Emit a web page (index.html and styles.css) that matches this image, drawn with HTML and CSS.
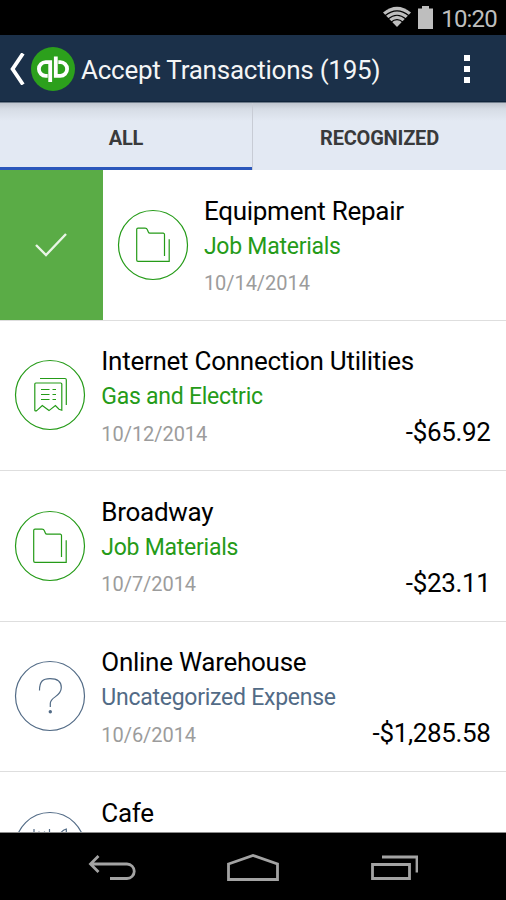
FILE: index.html
```html
<!DOCTYPE html>
<html lang="en">
<head>
<meta charset="utf-8">
<title>Accept Transactions</title>
<link rel="stylesheet" href="styles.css">
</head>
<body>
<svg class="defs" width="0" height="0">
  <symbol id="folder" viewBox="0 0 72 72">
    <circle cx="36" cy="36" r="34.5"/>
    <path d="M47.5 47V25.5a1.3 1.3 0 0 0-1.3-1.3H32.8Q31.8 24.2 31.3 23L30.5 21Q29.8 19.2 28 19.2H21a1.3 1.3 0 0 0-1.3 1.3V51a1.3 1.3 0 0 0 1.3 1.3H52.2V30.2"/>
  </symbol>
  <symbol id="receipt" viewBox="0 0 72 72">
    <circle cx="36" cy="36" r="34.5"/>
    <path d="M26 19.500H51a1.300 1.300 0 0 1 1.300 1.300V46M20.800 51V25a1 1 0 0 1 1-1H46.800a1 1 0 0 1 1 1V51.200L45 50.200 41.400 46.600 35 51.600 28.300 46.600 22.800 51.600Q20.800 52.500 20.800 51"/>
    <path d="M27 30.500h8.500M38.500 30.500h3.500M27 35.500h8.500M38.500 35.500h3.500M27 40.500h8.500M38.500 40.500h3.500"/>
  </symbol>
  <symbol id="question" viewBox="0 0 72 72">
    <circle cx="36" cy="36" r="34.5"/>
    <path d="M25.500 30.500C25.500 21 29 18.600 36 18.600C43.500 18.600 47.300 21.500 47.300 27.500C47.300 37 36.300 36.500 36.300 43.500V47"/>
    <circle class="dot" cx="36.300" cy="51.700" r="1.700"/>
  </symbol>
  <symbol id="dining" viewBox="0 0 72 72">
    <circle cx="36" cy="36" r="34.5"/>
    <path d="M20 18V29q0 4 7.700 4t7.800-4V18M25 20.500V33M30.500 20.500V53M52.300 53V18Q48 19 45.500 24V37H52.300"/>
  </symbol>
</svg>
<div class="screen">
  <div class="status">
    <svg class="wifi" width="28" height="22" viewBox="0 0 28 22">
      <path class="fan" d="M0 6.500Q14-5 28 6.500L14 21Z"/>
      <path class="gap" d="M2 9.800Q14 0 26 9.800M5 13Q14 5.500 23 13M8 16.200Q14 11.200 20 16.200"/>
    </svg>
    <svg class="battery" width="15" height="23" viewBox="0 0 15 23"><path d="M0 2.500H4V0H11V2.500H15V23H0Z"/></svg>
    <span class="time">10:20</span>
  </div>
  <header class="bar">
    <svg class="back" width="16" height="32" viewBox="0 0 16 32"><path d="M13 0.500 2.600 16 13 31.500"/></svg>
    <svg class="logo" width="44" height="44" viewBox="0 0 44 44">
      <circle cx="22" cy="22" r="22"/>
      <path d="M19.200 35V15.200H14.700a6.800 6.800 0 0 0 0 13.600H16.700M24.800 9.500V28.800H29.300a6.800 6.800 0 0 0 0-13.600H27.300"/>
    </svg>
    <h1>Accept Transactions (195)</h1>
    <div class="more"><i></i><i></i><i></i></div>
  </header>
  <nav class="tabs">
    <div class="tab active"><span>ALL</span></div>
    <div class="tab"><span>RECOGNIZED</span></div>
  </nav>
  <main class="list">
    <article class="row">
      <div class="accept"><svg width="34" height="26" viewBox="0 0 34 26"><path d="M2 13 12 23 32 2"/></svg></div>
      <svg class="icon green"><use href="#folder"/></svg>
      <div class="info"><h2>Equipment Repair</h2><p class="cat green">Job Materials</p><p class="date">10/14/2014</p></div>
    </article>
    <article class="row">
      <svg class="icon green"><use href="#receipt"/></svg>
      <div class="info"><h2>Internet Connection Utilities</h2><p class="cat green">Gas and Electric</p><p class="date">10/12/2014</p></div>
      <div class="amount">-$65.92</div>
    </article>
    <article class="row">
      <svg class="icon green"><use href="#folder"/></svg>
      <div class="info"><h2>Broadway</h2><p class="cat green">Job Materials</p><p class="date">10/7/2014</p></div>
      <div class="amount">-$23.11</div>
    </article>
    <article class="row">
      <svg class="icon blue"><use href="#question"/></svg>
      <div class="info"><h2>Online Warehouse</h2><p class="cat blue">Uncategorized Expense</p><p class="date">10/6/2014</p></div>
      <div class="amount">-$1,285.58</div>
    </article>
    <article class="row">
      <svg class="icon blue"><use href="#dining"/></svg>
      <div class="info"><h2>Cafe</h2></div>
    </article>
  </main>
  <footer class="nav">
    <svg width="48" height="26" viewBox="0 0 48 26"><path d="M10.500 1 2.500 9 10.500 17M2.500 9H39a7 7 0 0 1 0 14.500H22"/></svg>
    <svg width="52" height="28" viewBox="0 0 52 28"><path d="M1.500 10 26 1.500 50.500 10V25.500H1.500Z"/></svg>
    <svg width="48" height="26" viewBox="0 0 48 26"><path d="M2.500 9.500H39.500V23.500H2.500ZM12 2H47V17.500"/></svg>
  </footer>
</div>
</body>
</html>
```

FILE: styles.css
```css
* { box-sizing: border-box; }
body { margin: 0; font-family: Roboto, "Liberation Sans", sans-serif; background: #fff; }
h1, h2, p { margin: 0; font-weight: 400; white-space: nowrap; }
svg { display: block; flex: none; fill: none; }
.defs { position: absolute; }
.screen { width: 506px; height: 900px; display: flex; flex-direction: column; overflow: hidden; }

.status { height: 35px; flex: none; background: #000; display: flex; justify-content: flex-end; padding: 6px 9px 0 0; color: #bebebe; }
.wifi { margin-right: 7px; }
.fan, .battery path { fill: #bebebe; }
.gap { stroke: #000; stroke-width: 1.2; }
.time { font-size: 24px; line-height: 26px; margin-left: 8px; letter-spacing: -0.8px; }

.bar { height: 67px; flex: none; background: #1b3049; border-bottom: 1px solid #10243a; display: flex; align-items: center; padding: 2px 36.500px 0 8px; color: #f4f5f6; }
.back { margin: 0 5px 0 1.5px; }
.back path { stroke: #fff; stroke-width: 3.8; }
.logo circle { fill: #2ca01c; }
.logo path { stroke: #fff; stroke-width: 3.8; }
h1 { font-size: 26px; line-height: 32px; margin-left: 6.5px; flex: 1; padding-top: 1px; letter-spacing: -0.24px; }
.more { display: flex; flex-direction: column; gap: 5px; }
.more i { width: 6px; height: 6px; background: #fff; }

.tabs { height: 68px; flex: none; display: flex; background: linear-gradient(#c0c6cf, #d6dce5 6px, #e3e9f3 18px); color: #393a3b; border-top: 1px solid #6f7c8b; }
.tab { flex: 1; display: flex; align-items: center; justify-content: center; font-size: 20px; font-weight: 700; padding-top: 2px; letter-spacing: -0.2px; }
.tab.active { flex: none; width: 252px; border-bottom: 3px solid #2b57bb; padding-top: 5px; }
.tab + .tab { border-left: 1px solid #c8ccd5; }

.list { flex: 1; min-height: 0; overflow: hidden; padding-top: 0.4px; }
.row { height: 150.4px; display: flex; border-bottom: 1px solid #dedede; overflow: hidden; }
.accept { width: 102.6px; flex: none; background: #5aac46; display: flex; align-items: center; justify-content: center; }
.accept path { stroke: #e9f5e6; stroke-width: 2.4; }
.icon { width: 72px; height: 72px; margin: 38.6px 15px 0 14.300px; stroke: currentColor; stroke-width: 1.200; }
.dot { fill: currentColor; stroke: none; }
.green { color: #259b18; }
.blue { color: #526b86; }
.info { padding-top: 23.6px; flex: 1; min-width: 0; }
h2 { font-size: 26px; line-height: 34px; color: #000; letter-spacing: -0.27px; }
.cat { font-size: 23px; line-height: 34px; margin-top: 2px; letter-spacing: -0.25px; }
.date { font-size: 20px; line-height: 30px; margin-top: 4.400px; color: #9c9c9c; letter-spacing: -0.05px; }
.amount { flex: none; font-size: 26px; line-height: 34px; padding: 94.6px 15.5px 0 0; color: #000; letter-spacing: -0.35px; }

.nav { height: 68px; flex: none; background: #000; border-top: 1px solid #8c8c8c; display: flex; justify-content: center; align-items: center; gap: 91px; padding-top: 2px; }
.nav path { stroke: #a3a3a3; stroke-width: 2.800; }
```
